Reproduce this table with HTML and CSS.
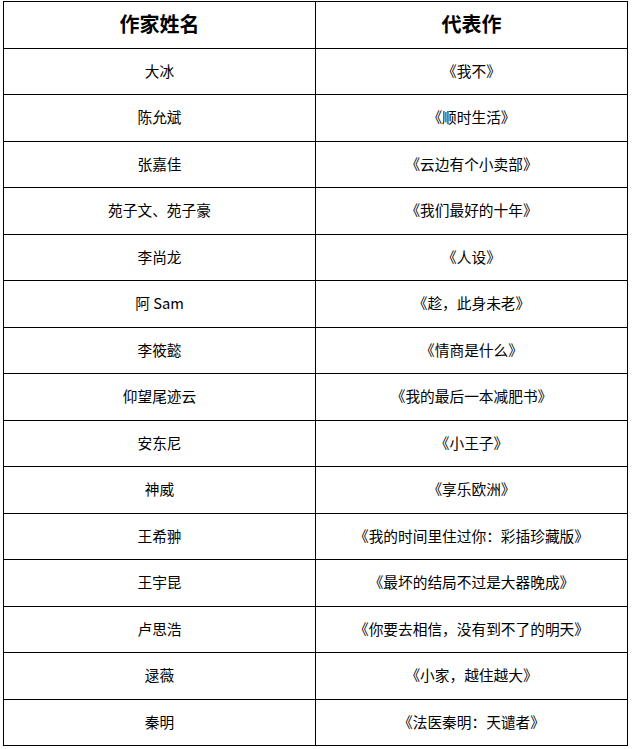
FILE: index.html
```html
<!DOCTYPE html>
<html lang="zh-CN">
<head>
<meta charset="utf-8">
<link rel="stylesheet" href="styles.css">
</head>
<body>
<table class="book-table">
  <thead>
    <tr><th>作家姓名</th><th>代表作</th></tr>
  </thead>
  <tbody>
    <tr><td>大冰</td><td>《我不》</td></tr>
    <tr><td>陈允斌</td><td>《顺时生活》</td></tr>
    <tr><td>张嘉佳</td><td>《云边有个小卖部》</td></tr>
    <tr><td>苑子文、苑子豪</td><td>《我们最好的十年》</td></tr>
    <tr><td>李尚龙</td><td>《人设》</td></tr>
    <tr><td>阿 Sam</td><td>《趁，此身未老》</td></tr>
    <tr><td>李筱懿</td><td>《情商是什么》</td></tr>
    <tr><td>仰望尾迹云</td><td>《我的最后一本减肥书》</td></tr>
    <tr><td>安东尼</td><td>《小王子》</td></tr>
    <tr><td>神威</td><td>《享乐欧洲》</td></tr>
    <tr><td>王希翀</td><td>《我的时间里住过你：彩插珍藏版》</td></tr>
    <tr><td>王宇昆</td><td>《最坏的结局不过是大器晚成》</td></tr>
    <tr><td>卢思浩</td><td>《你要去相信，没有到不了的明天》</td></tr>
    <tr><td>逯薇</td><td>《小家，越住越大》</td></tr>
    <tr><td>秦明</td><td>《法医秦明：天谴者》</td></tr>
  </tbody>
</table>
</body>
</html>
```

FILE: styles.css
```css
html, body {
  margin: 0;
  padding: 0;
  background: #fff;
}
body {
  padding: 1px 4px 0 3px;
  font-family: "Noto Sans CJK SC", "Noto Sans", sans-serif;
  color: #000;
}
.book-table {
  width: 625px;
  border-collapse: collapse;
  table-layout: fixed;
}
.book-table th,
.book-table td {
  border: 1px solid #000;
  text-align: center;
  vertical-align: middle;
  padding: 0 0 2px 0;
  height: 43.5px;
  width: 50%;
}
.book-table th {
  font-size: 20px;
  font-weight: 700;
}
.book-table td {
  font-size: 14.7px;
}
```
